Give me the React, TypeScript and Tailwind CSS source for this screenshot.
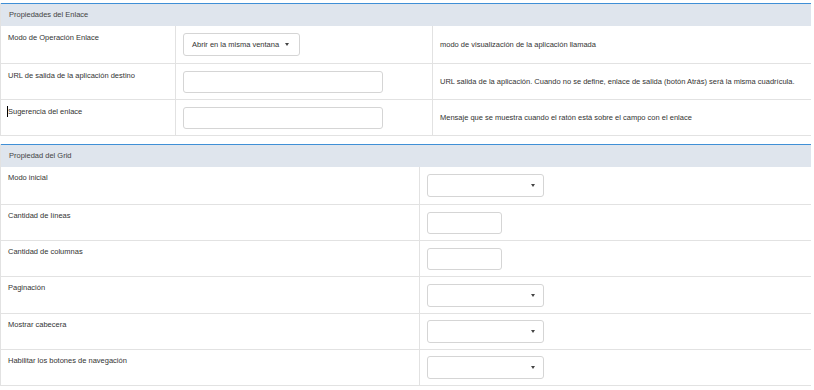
import React from 'react';

const font = { fontFamily: '"Liberation Sans", Arial, sans-serif' };

const Caret = () => (
  <span className="inline-block w-0 h-0 border-l-[2.5px] border-r-[2.5px] border-t-[3px] border-l-transparent border-r-transparent border-t-[#444]" />
);

const Select = ({ value = '', w, pr }: { value?: string; w: string; pr: string }) => (
  <div className={`${w} ${pr} h-[23px] border border-[#d5d5d5] rounded-[3px] bg-white flex items-center justify-between pl-[8px] text-[#333]`}>
    <span>{value}</span>
    <Caret />
  </div>
);

const Input = ({ w }: { w: string }) => (
  <div className={`${w} h-[22px] border border-[#d5d5d5] rounded-[3px] bg-white`} />
);

const PanelHeader = ({ title }: { title: string }) => (
  <div className="h-[23px] bg-[#dfe5ed] border-t border-[#3f8fd6] flex items-center pl-[8px] text-[#444]">
    {title}
  </div>
);

interface LinkRow {
  label: React.ReactNode;
  field: React.ReactNode;
  desc: string;
  h: string;
}

const linkRows: LinkRow[] = [
  {
    label: 'Modo de Operación Enlace',
    field: <Select value="Abrir en la misma ventana" w="w-[117px]" pr="pr-[10px]" />,
    desc: 'modo de visualización de la aplicación llamada',
    h: 'h-[37px]',
  },
  {
    label: 'URL de salida de la aplicación destino',
    field: <Input w="w-[200px]" />,
    desc: 'URL salida de la aplicación. Cuando no se define, enlace de salida (botón Atrás) será la misma cuadrícula.',
    h: 'h-[36px]',
  },
  {
    label: (
      <span className="relative">
        <span className="absolute left-[-1px] top-[-1px] w-px h-[11px] bg-black" />
        Sugerencia del enlace
      </span>
    ),
    field: <Input w="w-[200px]" />,
    desc: 'Mensaje que se muestra cuando el ratón está sobre el campo con el enlace',
    h: 'h-[36px]',
  },
];

const gridRows = [
  { label: 'Modo inicial', field: <Select w="w-[117px]" pr="pr-[8px]" />, h: 'h-[37px]' },
  { label: 'Cantidad de líneas', field: <Input w="w-[75px]" />, h: 'h-[36px]' },
  { label: 'Cantidad de columnas', field: <Input w="w-[75px]" />, h: 'h-[36px]' },
  { label: 'Paginación', field: <Select w="w-[117px]" pr="pr-[8px]" />, h: 'h-[37px]' },
  { label: 'Mostrar cabecera', field: <Select w="w-[117px]" pr="pr-[8px]" />, h: 'h-[36px]' },
  { label: 'Habilitar los botones de navegación', field: <Select w="w-[117px]" pr="pr-[8px]" />, h: 'h-[36px]' },
];

export default function App() {
  return (
    <div className="w-[814px] h-[390px] bg-white pt-[3px] text-[7.5px] text-[#333] leading-none" style={font}>
      {/* Propiedades del Enlace */}
      <div className="w-[811px] border-l border-b border-[#e2e2e2]">
        <PanelHeader title="Propiedades del Enlace" />
        {linkRows.map((r, i) => (
          <div key={i} className={`flex ${r.h} ${i > 0 ? 'border-t border-[#e2e2e2]' : ''}`}>
            <div className="w-[174px] pl-[7px] pt-[8px]">{r.label}</div>
            <div className="w-[257px] border-l border-[#e2e2e2] pl-[7px] flex items-center">{r.field}</div>
            <div className="flex-1 border-l border-[#e2e2e2] pl-[7px] flex items-center">{r.desc}</div>
          </div>
        ))}
      </div>

      {/* Propiedad del Grid */}
      <div className="w-[811px] mt-[8px] border-l border-b border-[#e2e2e2]">
        <PanelHeader title="Propiedad del Grid" />
        {gridRows.map((r, i) => (
          <div key={i} className={`flex ${r.h} ${i > 0 ? 'border-t border-[#e2e2e2]' : ''}`}>
            <div className="w-[418px] pl-[7px] pt-[7px]">{r.label}</div>
            <div className="flex-1 border-l border-[#e2e2e2] pl-[7px] flex items-center">{r.field}</div>
          </div>
        ))}
      </div>
    </div>
  );
}
